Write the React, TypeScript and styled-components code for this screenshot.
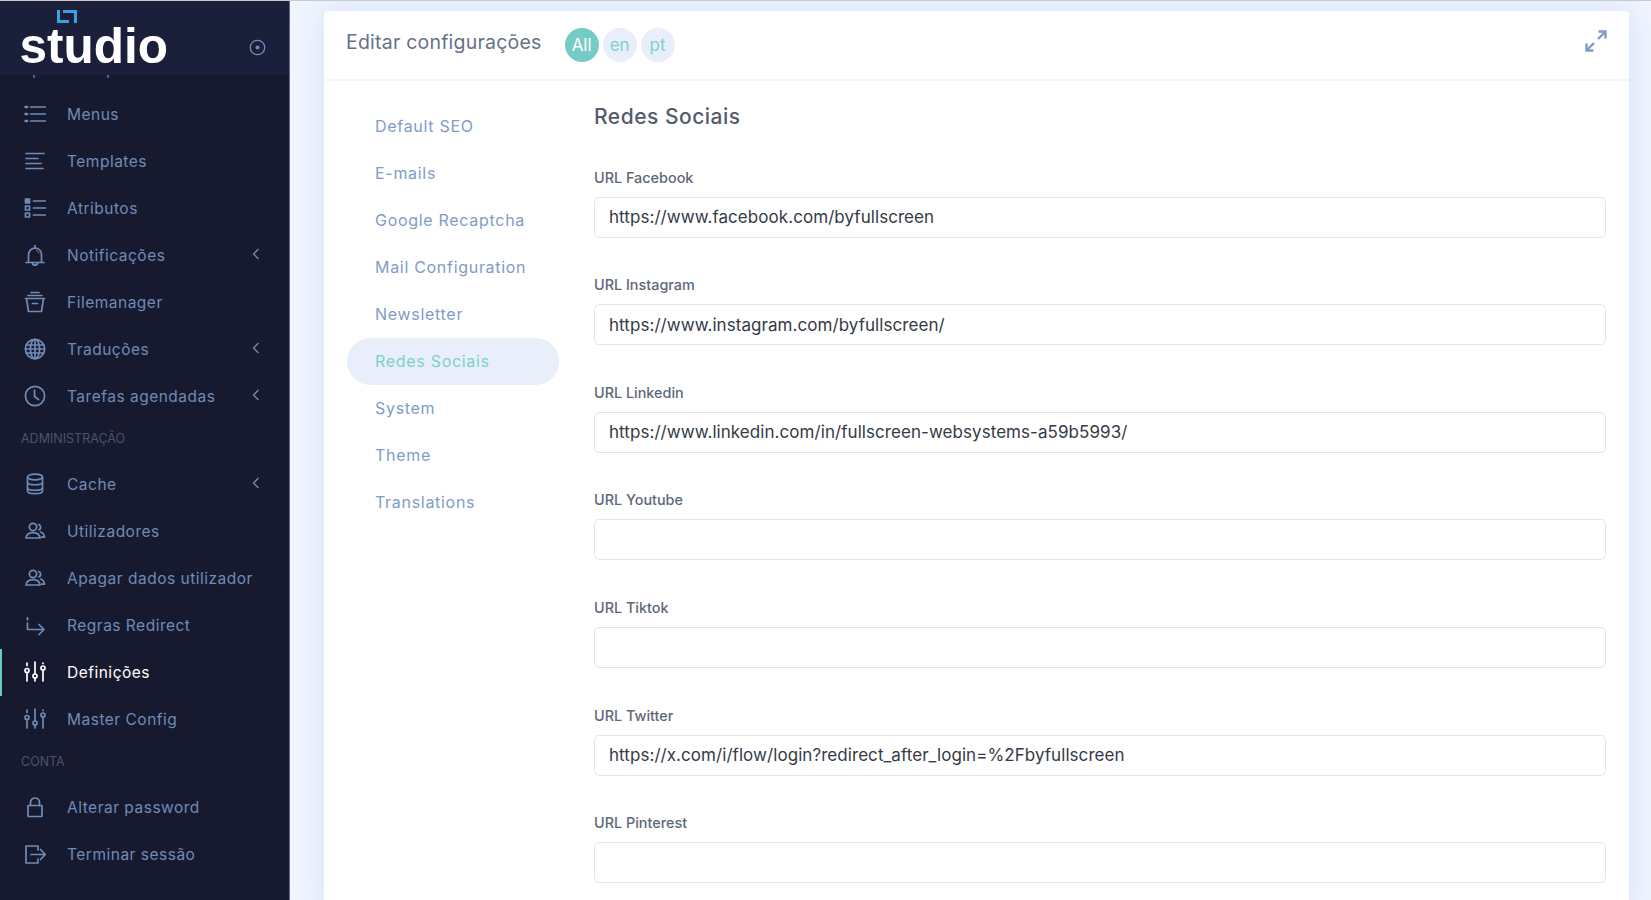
import React from "react";
import styled, { createGlobalStyle } from "styled-components";

const GlobalStyle = createGlobalStyle`
  html, body {
    margin: 0;
    padding: 0;
    height: 900px;
    overflow: hidden;
    background: #f0f5ff;
    font-family: Inter, "Open Sans", sans-serif;
  }
  * { box-sizing: border-box; }
`;

type IconName =
  | "menus" | "templates" | "attributes" | "bell" | "tray" | "globe" | "clock"
  | "database" | "users" | "redirect" | "sliders" | "lock" | "logout";

const iconPaths: Record<IconName, React.ReactNode> = {
  menus: (
    <>
      <path d="M6.5 4h15M6.5 11h15M6.5 18h15" />
      <path d="M1.5 4h1.6M1.5 11h1.6M1.5 18h1.6" strokeWidth="2.4" />
    </>
  ),
  templates: <path d="M2 3.5h18M2 8.5h12M2 13.5h15M2 18.5h17" />,
  attributes: (
    <>
      <rect x="1.5" y="2" width="4" height="4" fill="currentColor" />
      <rect x="1.5" y="9" width="4" height="4" />
      <rect x="1.5" y="16" width="4" height="4" />
      <path d="M9.5 4h12M9.5 11h12M9.5 18h12" />
    </>
  ),
  bell: (
    <>
      <path d="M2 18.5h18M4.5 18.5V11c0-4 2.6-6.8 6.5-6.8s6.5 2.8 6.5 6.8v7.5" />
      <path d="M11 4V1.5M8.5 18.5c0 3.6 5 3.6 5 0" />
      <path d="M12.5 6.5c1.2.4 2 1.2 2.4 2.4" strokeWidth="1" />
    </>
  ),
  tray: (
    <>
      <path d="M7 1.5h8M4 4.5h14M1.5 7.5h19" />
      <path d="M2.5 7.5 4.5 20.5h13l2-13" />
      <path d="M8.5 12.5h5" />
    </>
  ),
  globe: (
    <>
      <circle cx="11" cy="11" r="9.6" />
      <ellipse cx="11" cy="11" rx="4.6" ry="9.6" />
      <path d="M11 1.4v19.2M2.3 7h17.4M2.3 15h17.4M1.4 11h19.2" />
    </>
  ),
  clock: (
    <>
      <circle cx="11" cy="11" r="9.6" />
      <path d="M10.5 5v6.5l4 3" />
    </>
  ),
  database: (
    <>
      <ellipse cx="11" cy="4" rx="7.5" ry="2.8" />
      <path d="M3.5 4v14c0 3.6 15 3.6 15 0V4" />
      <path d="M3.5 9.5c0 3 15 3 15 0M3.5 15c0 3 15 3 15 0" />
    </>
  ),
  users: (
    <>
      <circle cx="9" cy="7" r="3.6" />
      <path d="M2 18c.4-3.6 3-5.4 7-5.4s6.6 1.8 7 5.4z" />
      <path d="M14.5 4.5c2.6.2 2.8 4.6.4 5.2M16.5 12c2.2.6 3.6 2.2 4 5.2h-3" />
    </>
  ),
  redirect: (
    <>
      <path d="M3.5 9v6.5h16" />
      <path d="M15 10.5l5 5-5 5" />
      <path d="M3.5 4v1.4" strokeWidth="2" />
    </>
  ),
  sliders: (
    <>
      <path d="M3 2v2.5M3 12.5V20M11 1v11.5M11 17.5V20M19 2v.5M19 10v10" />
      <circle cx="3" cy="9.5" r="2" />
      <circle cx="11" cy="15" r="2" />
      <circle cx="19" cy="7" r="2" />
    </>
  ),
  lock: (
    <>
      <rect x="4" y="9.5" width="14" height="11" rx="0.5" />
      <path d="M6.5 9.5V6.5c0-6 9-6 9 0v3" />
    </>
  ),
  logout: (
    <>
      <path d="M14 7V3H2v17h12v-4" />
      <path d="M7 11.5h14M16.5 6.5l4.8 5-4.8 5" />
    </>
  ),
};

const Page = styled.div`
  display: flex;
  width: 1651px;
  height: 900px;
  overflow: hidden;
  border-top: 1px solid #c9cac6;
`;

const Sidebar = styled.aside`
  flex: 0 0 290px;
  height: 900px;
  background: #171a2e;
  border-right: 1px solid #5f6a8c;
  overflow: hidden;
`;

const Brand = styled.div`
  display: flex;
  align-items: flex-start;
  justify-content: space-between;
  height: 74px;
  padding: 0 23px 0 19.5px;
  background: #1a1f3a;
`;

const LogoBlock = styled.div`
  display: flex;
  flex-direction: column;
  align-items: flex-start;
`;

const LogoMark = styled.svg`
  display: block;
  width: 20px;
  height: 13px;
  margin: 9px 0 0 37.5px;
`;

const LogoText = styled.div`
  font-family: "Liberation Sans", Arial, sans-serif;
  font-weight: 700;
  font-size: 49.5px;
  line-height: 46px;
  height: 46px;
  color: #fff;
`;

const PinButton = styled.svg`
  display: block;
  width: 17px;
  height: 17px;
  margin-top: 38px;
  color: #6f8bb8;
`;

// the row above Menus is scrolled away, only a few pixels of it show under the brand
const ScrolledPeek = styled.div`
  display: flex;
  gap: 72px;
  height: 15.5px;
  padding-left: 33px;
`;

const PeekSpeck = styled.span`
  width: 2px;
  height: 3px;
  background: #4d6185;
`;

const NavRow = styled.div<{ $active?: boolean }>`
  display: flex;
  align-items: center;
  height: 47px;
  padding: 0 29px 0 22px;
  font-size: 15.5px;
  letter-spacing: 0.5px;
  color: ${(p) => (p.$active ? "#ffffff" : "#6f8bb8")};
  border-left: 2px solid ${(p) => (p.$active ? "#66cdbd" : "transparent")};
`;

const NavIcon = styled.svg`
  flex: 0 0 22px;
  width: 22px;
  height: 22px;
  margin-right: 21px;
  fill: none;
  stroke: currentColor;
  stroke-width: 1.7;
  stroke-linecap: round;
  stroke-linejoin: round;
`;

const NavLabel = styled.span`
  flex: 1;
  white-space: nowrap;
`;

const Chevron = styled.svg`
  width: 8px;
  height: 12px;
  margin-top: -2px;
  fill: none;
  stroke: currentColor;
  stroke-width: 1.3;
`;

const SectionTitle = styled.div`
  height: 41px;
  padding: 9px 0 0 21px;
  font-size: 12.5px;
  line-height: 20px;
  color: #4b5270;
  text-transform: uppercase;
`;

const Main = styled.main`
  flex: 1;
  padding: 10px 22px 0 34px;
`;

const Card = styled.section`
  height: 900px;
  background: #fff;
  border-radius: 4px;
  box-shadow: 0 0 30px rgba(120, 150, 215, 0.22);
`;

const CardHeader = styled.header`
  display: flex;
  align-items: center;
  height: 70px;
  padding: 0 22px;
  border-bottom: 2px solid #f3f6fc;
`;

const CardTitle = styled.h1`
  margin: -6px 23px 0 0;
  font-size: 19.5px;
  font-weight: 400;
  letter-spacing: 0.22px;
  color: #667285;
  white-space: nowrap;
`;

const LangGroup = styled.div`
  display: flex;
  flex: 1;
  gap: 4px;
`;

const LangPill = styled.div<{ $active?: boolean }>`
  display: flex;
  align-items: center;
  justify-content: center;
  width: 34px;
  height: 34px;
  border-radius: 50%;
  font-size: 17px;
  background: ${(p) => (p.$active ? "#75cbc5" : "#e8effb")};
  color: ${(p) => (p.$active ? "#ffffff" : "#7ed0c9")};
`;

const ExpandIcon = styled.svg`
  width: 22px;
  height: 22px;
  margin-top: -9px;
  fill: none;
  stroke: #7f9cc4;
  stroke-width: 2.4;
`;

const CardBody = styled.div`
  display: flex;
  gap: 35px;
  padding: 0 23px;
`;

const SettingsNav = styled.nav`
  flex: 0 0 212px;
  padding-top: 21.5px;
`;

const SettingsItem = styled.div<{ $active?: boolean }>`
  display: flex;
  align-items: center;
  height: 47px;
  padding-left: 28px;
  border-radius: 24px;
  font-size: 16px;
  letter-spacing: 0.7px;
  background: ${(p) => (p.$active ? "#e8effb" : "transparent")};
  color: ${(p) => (p.$active ? "#7ed0c9" : "#7f9cc9")};
`;

const FormArea = styled.div`
  flex: 1;
  padding-top: 22px;
`;

const FormHeading = styled.h2`
  margin: 0 0 36.6px;
  height: 28px;
  font-size: 21px;
  line-height: 28px;
  font-weight: 500;
  letter-spacing: 0.5px;
  color: #525c6b;
`;

const Field = styled.div`
  margin-bottom: 37.6px;
`;

const FieldLabel = styled.label`
  display: block;
  height: 20px;
  margin-bottom: 9px;
  font-size: 14.4px;
  line-height: 20px;
  font-weight: 500;
  color: #5d6878;
`;

const FieldInput = styled.input`
  display: block;
  width: 100%;
  height: 41px;
  padding: 0 14px;
  border: 1.5px solid #e0e7f3;
  border-radius: 5px;
  outline: none;
  background: #fff;
  font-family: inherit;
  font-size: 17px;
  letter-spacing: 0.06px;
  color: #343a46;
`;

type NavEntry =
  | { section: string }
  | { label: string; icon: IconName; chevron?: boolean; active?: boolean };

const navEntries: NavEntry[] = [
  { label: "Menus", icon: "menus" },
  { label: "Templates", icon: "templates" },
  { label: "Atributos", icon: "attributes" },
  { label: "Notificações", icon: "bell", chevron: true },
  { label: "Filemanager", icon: "tray" },
  { label: "Traduções", icon: "globe", chevron: true },
  { label: "Tarefas agendadas", icon: "clock", chevron: true },
  { section: "Administração" },
  { label: "Cache", icon: "database", chevron: true },
  { label: "Utilizadores", icon: "users" },
  { label: "Apagar dados utilizador", icon: "users" },
  { label: "Regras Redirect", icon: "redirect" },
  { label: "Definições", icon: "sliders", active: true },
  { label: "Master Config", icon: "sliders" },
  { section: "Conta" },
  { label: "Alterar password", icon: "lock" },
  { label: "Terminar sessão", icon: "logout" },
];

const settingsItems = [
  "Default SEO",
  "E-mails",
  "Google Recaptcha",
  "Mail Configuration",
  "Newsletter",
  "Redes Sociais",
  "System",
  "Theme",
  "Translations",
];

const fields = [
  { label: "URL Facebook", value: "https://www.facebook.com/byfullscreen" },
  { label: "URL Instagram", value: "https://www.instagram.com/byfullscreen/" },
  { label: "URL Linkedin", value: "https://www.linkedin.com/in/fullscreen-websystems-a59b5993/" },
  { label: "URL Youtube", value: "" },
  { label: "URL Tiktok", value: "" },
  { label: "URL Twitter", value: "https://x.com/i/flow/login?redirect_after_login=%2Fbyfullscreen" },
  { label: "URL Pinterest", value: "" },
];

const App = () => (
  <Page>
    <GlobalStyle />
    <Sidebar>
      <Brand>
        <LogoBlock>
          <LogoMark viewBox="0 0 20 13">
            <path d="M0 0h3v10h9v3H0z M6 0h14v13h-3V3H6z" fill="#3f9fe3" />
          </LogoMark>
          <LogoText>studio</LogoText>
        </LogoBlock>
        <PinButton viewBox="0 0 17 17" fill="none" stroke="currentColor" strokeWidth="1.3">
          <circle cx="8.5" cy="8.5" r="7.2" />
          <circle cx="8.5" cy="8.5" r="2" fill="currentColor" stroke="none" />
        </PinButton>
      </Brand>
      <ScrolledPeek>
        <PeekSpeck />
        <PeekSpeck />
      </ScrolledPeek>
      <nav>
        {navEntries.map((entry) =>
          "section" in entry ? (
            <SectionTitle key={entry.section}>{entry.section}</SectionTitle>
          ) : (
            <NavRow key={entry.label} $active={entry.active}>
              <NavIcon viewBox="0 0 22 22">{iconPaths[entry.icon]}</NavIcon>
              <NavLabel>{entry.label}</NavLabel>
              {entry.chevron && (
                <Chevron viewBox="0 0 8 12">
                  <path d="M6.5 1 1.5 6l5 5" />
                </Chevron>
              )}
            </NavRow>
          )
        )}
      </nav>
    </Sidebar>
    <Main>
      <Card>
        <CardHeader>
          <CardTitle>Editar configurações</CardTitle>
          <LangGroup>
            <LangPill $active>All</LangPill>
            <LangPill>en</LangPill>
            <LangPill>pt</LangPill>
          </LangGroup>
          <ExpandIcon viewBox="0 0 22 22">
            <path d="M13 9l7-7M13.5 1.5h7v7M9 13l-7 7M1.5 13.5v7h7" />
          </ExpandIcon>
        </CardHeader>
        <CardBody>
          <SettingsNav>
            {settingsItems.map((item) => (
              <SettingsItem key={item} $active={item === "Redes Sociais"}>
                {item}
              </SettingsItem>
            ))}
          </SettingsNav>
          <FormArea>
            <FormHeading>Redes Sociais</FormHeading>
            {fields.map((field) => (
              <Field key={field.label}>
                <FieldLabel>{field.label}</FieldLabel>
                <FieldInput defaultValue={field.value} />
              </Field>
            ))}
          </FormArea>
        </CardBody>
      </Card>
    </Main>
  </Page>
);

export default App;
